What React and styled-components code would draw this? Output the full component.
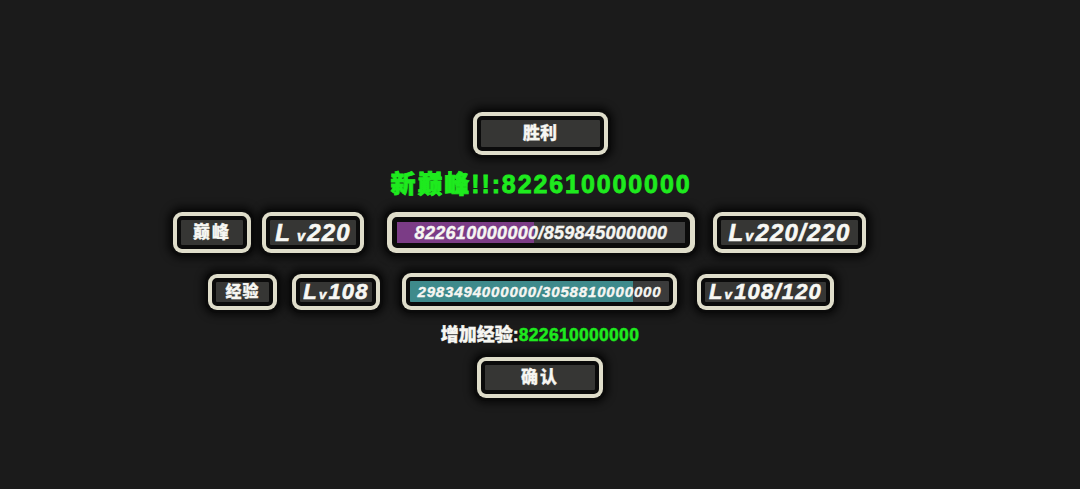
import React from 'react';
import styled, { createGlobalStyle } from 'styled-components';

const GlobalStyle = createGlobalStyle`
    html, body {
        margin: 0;
        padding: 0;
        background: #1b1b1b;
    }
    body {
        font-family: "Liberation Sans", "Noto Sans CJK SC", sans-serif;
    }
`;

const Page = styled.div`
    width: 1080px;
    height: 489px;
    box-sizing: border-box;
    padding-top: 112px;
    display: flex;
    flex-direction: column;
    align-items: center;
    overflow: hidden;
`;

const Frame = styled.div`
    box-sizing: border-box;
    width: ${p => p.w}px;
    height: ${p => p.h}px;
    margin-left: ${p => p.ml || 0}px;
    padding: ${p => p.pad || 4}px;
    background: #dfddca;
    border-radius: 9px;
    box-shadow: 0 0 0 3px #0b0b0b, 0 0 7px 6px rgba(0, 0, 0, 0.6);
    flex-shrink: 0;
`;

const Inner = styled.div`
    box-sizing: border-box;
    height: 100%;
    border: ${p => p.bw || 4}px solid #0b0b0b;
    border-radius: 5px;
    background: #363634;
    display: flex;
    align-items: center;
    justify-content: center;
    position: relative;
    overflow: hidden;
`;

const Label = styled.span`
    color: #f6f6f2;
    font-weight: 900;
    font-size: ${p => p.size || 16}px;
    letter-spacing: ${p => p.ls || 0}px;
    line-height: 1;
    -webkit-text-stroke: 0.3px #f6f6f2;
`;

const Title = styled.div`
    margin-top: 14px;
    height: 30px;
    line-height: 30px;
    color: #1eea1e;
    font-weight: 900;
    font-size: 25px;
    letter-spacing: 1.9px;
    margin-left: 2px;
    -webkit-text-stroke: 0.8px #1eea1e;
`;

const Row = styled.div`
    align-self: stretch;
    display: flex;
    align-items: center;
    padding-left: ${p => p.left}px;
    margin-top: ${p => p.mt}px;
`;

const LvText = styled.span`
    color: #f8f8f4;
    font-weight: 700;
    font-style: italic;
    font-size: ${p => p.size}px;
    letter-spacing: 1.2px;
    line-height: 1;
    display: flex;
    align-items: baseline;
    -webkit-text-stroke: 0.6px #f8f8f4;
`;

const LvL = styled.span`
    margin-right: ${p => p.gap || 1}px;
`;

const LvV = styled.span`
    font-size: 0.6em;
    margin-right: 1px;
`;

const BarFill = styled.div`
    position: absolute;
    left: 0;
    top: 0;
    bottom: 0;
    background: ${p => p.color};
`;

const BarBg = styled(Inner)`
    background: #3b3b3b;
`;

const BarText = styled.span`
    position: relative;
    color: #f6f6f2;
    font-weight: 700;
    font-style: italic;
    font-size: ${p => p.size}px;
    letter-spacing: ${p => p.ls}px;
    line-height: 1;
    -webkit-text-stroke: 0.4px #f6f6f2;
`;

const Gain = styled.div`
    margin-top: 15px;
    height: 20px;
    line-height: 20px;
    font-weight: 900;
    font-size: 18px;
    color: #f6f6f2;
    -webkit-text-stroke: 0.4px #f6f6f2;
`;

const Green = styled.span`
    color: #1eea1e;
    font-size: 17.5px;
    letter-spacing: 0.3px;
    -webkit-text-stroke: 0.5px #1eea1e;
`;

const Spacer = styled.div`
    height: ${p => p.h}px;
`;

const Lv = ({ size, gap, children }) => (
    <LvText size={size}>
        <LvL gap={gap}>L</LvL>
        <LvV>v</LvV>
        {children}
    </LvText>
);

const Bar = ({ w, h, pad, bw, pct, color, size, ls, ml, children }) => (
    <Frame w={w} h={h} pad={pad} ml={ml}>
        <BarBg bw={bw}>
            <BarFill color={color} style={{ width: pct + '%' }} />
            <BarText size={size} ls={ls}>{children}</BarText>
        </BarBg>
    </Frame>
);

export default function App() {
    return (
        <Page>
            <GlobalStyle />
            <Frame w={135} h={43}>
                <Inner><Label size={17}>胜利</Label></Inner>
            </Frame>

            <Title>新巅峰!!:822610000000</Title>

            <Row left={173} mt={13}>
                <Frame w={78} h={41}>
                    <Inner><Label size={17} ls={2}>巅峰</Label></Inner>
                </Frame>
                <Frame w={102} h={41} ml={11}>
                    <Inner><Lv size={24} gap={6}>220</Lv></Inner>
                </Frame>
                <Bar w={308} h={41} pad={5} bw={5} ml={23} pct={47.4} color="#7b3c86" size={18} ls={0.3}>
                    822610000000/859845000000
                </Bar>
                <Frame w={153} h={41} ml={18}>
                    <Inner><Lv size={24}>220/220</Lv></Inner>
                </Frame>
            </Row>

            <Row left={208} mt={20}>
                <Frame w={69} h={36}>
                    <Inner><Label size={16} ls={1}>经验</Label></Inner>
                </Frame>
                <Frame w={88} h={36} ml={15}>
                    <Inner><Lv size={22}>108</Lv></Inner>
                </Frame>
                <Bar w={275} h={37} ml={22} pct={86} color="#3e8a8b" size={15} ls={0.85}>
                    2983494000000/3058810000000
                </Bar>
                <Frame w={137} h={36} ml={20}>
                    <Inner><Lv size={22}>108/120</Lv></Inner>
                </Frame>
            </Row>

            <Gain>增加经验:<Green>822610000000</Green></Gain>

            <Spacer h={12} />
            <Frame w={126} h={41}>
                <Inner><Label size={17} ls={2}>确认</Label></Inner>
            </Frame>
        </Page>
    );
}
